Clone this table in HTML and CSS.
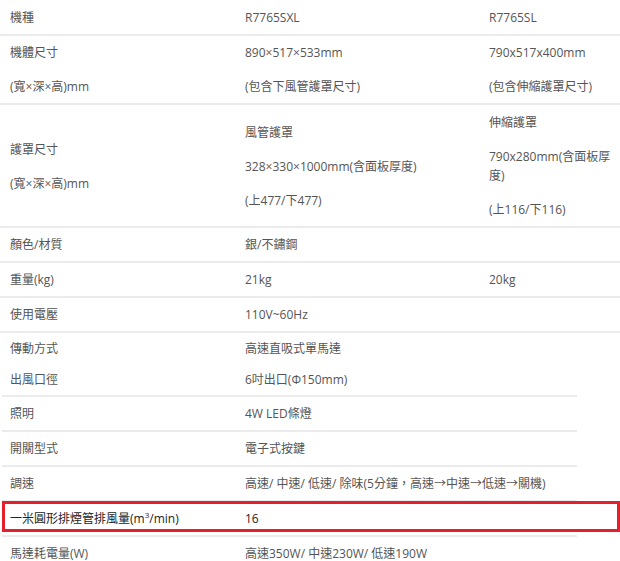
FILE: index.html
```html
<!DOCTYPE html>
<html lang="zh-Hant">
<head>
<meta charset="utf-8">
<title>規格</title>
<link rel="stylesheet" href="styles.css">
</head>
<body>
<div class="specs">
  <table class="spec upper">
    <colgroup><col class="c1"><col class="c2"><col class="c3"></colgroup>
    <tr class="first">
      <td>機種</td>
      <td>R7765SXL</td>
      <td>R7765SL</td>
    </tr>
    <tr>
      <td><p>機體尺寸</p><p>(寬×深×高)mm</p></td>
      <td><p>890×517×533mm</p><p>(包含下風管護罩尺寸)</p></td>
      <td><p>790x517x400mm</p><p>(包含伸縮護罩尺寸)</p></td>
    </tr>
    <tr class="tall">
      <td><p>護罩尺寸</p><p>(寬×深×高)mm</p></td>
      <td><p>風管護罩</p><p>328×330×1000mm(含面板厚度)</p><p>(上477/下477)</p></td>
      <td><p>伸縮護罩</p><p>790x280mm(含面板厚度)</p><p>(上116/下116)</p></td>
    </tr>
    <tr>
      <td>顏色/材質</td>
      <td colspan="2">銀/不鏽鋼</td>
    </tr>
    <tr>
      <td>重量(kg)</td>
      <td>21kg</td>
      <td>20kg</td>
    </tr>
    <tr>
      <td>使用電壓</td>
      <td colspan="2">110V~60Hz</td>
    </tr>
  </table>
  <table class="spec lower">
    <colgroup><col class="c1"><col class="c2"></colgroup>
    <tr class="noline">
      <td>傳動方式</td>
      <td>高速直吸式單馬達</td>
    </tr>
    <tr class="tight">
      <td>出風口徑</td>
      <td>6吋出口(Φ150mm)</td>
    </tr>
    <tr>
      <td>照明</td>
      <td>4W LED條燈</td>
    </tr>
    <tr>
      <td>開關型式</td>
      <td>電子式按鍵</td>
    </tr>
    <tr>
      <td>調速</td>
      <td>高速/ 中速/ 低速/ 除味(5分鐘，高速→中速→低速→關機)</td>
    </tr>
    <tr class="highlight">
      <td>一米圓形排煙管排風量(m<sup>3</sup>/min)</td>
      <td>16</td>
    </tr>
    <tr>
      <td>馬達耗電量(W)</td>
      <td>高速350W/ 中速230W/ 低速190W</td>
    </tr>
  </table>
</div>
</body>
</html>
```
FILE: styles.css
```css
html, body {
  margin: 0;
  padding: 0;
  background: #ffffff;
}

body {
  width: 620px;
  font-family: "Open Sans", "Noto Sans CJK TC", sans-serif;
  font-size: 12px;
  color: #555555;
}

.spec {
  border-collapse: collapse;
  table-layout: fixed;
}

.spec td {
  padding: 7px 10px;
  line-height: 19px;
  vertical-align: middle;
  border-bottom: 2px solid #ebebeb;
  text-align: left;
}

.spec p {
  margin: 15px 0 0;
}

.spec p:first-child {
  margin-top: 0;
}

.upper {
  width: 620px;
}

.upper .c1 { width: 235px; }
.upper .c2 { width: 244px; }
.upper .c3 { width: 141px; }

.upper td:nth-child(3) {
  padding-right: 0;
}

.upper .first td {
  padding-top: 8px;
}

.upper .tall td {
  padding-top: 8px;
}

.lower {
  width: 575px;
  margin-left: 2px;
}

.lower .c1 { width: 233px; }
.lower .c2 { width: 342px; }

.lower td:first-child {
  padding-left: 8px;
}

.lower .noline td {
  border-bottom: 0;
  padding-top: 6px;
  padding-bottom: 6px;
}

.lower .tight td {
  padding-top: 6px;
  padding-bottom: 6px;
}

.highlight td {
  color: #222222;
}

.highlight td:first-child {
  position: relative;
}

.highlight td:first-child::after {
  content: "";
  position: absolute;
  left: 0;
  top: -1px;
  width: 618px;
  height: 31px;
  box-sizing: border-box;
  border: 3px solid #e3202b;
  pointer-events: none;
}

sup {
  font-size: 8px;
  line-height: 0;
  vertical-align: 5px;
}
```
